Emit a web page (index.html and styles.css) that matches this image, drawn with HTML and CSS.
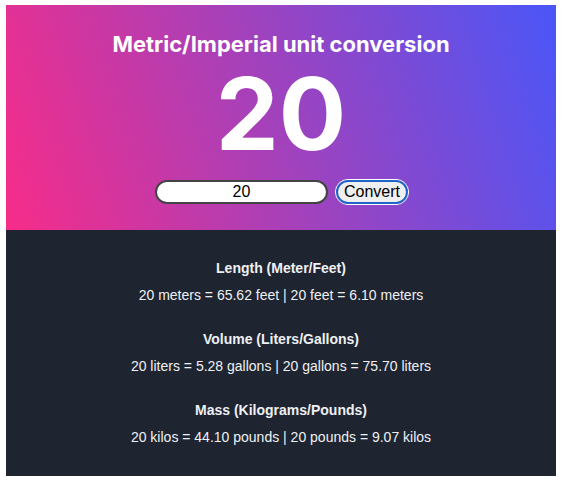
FILE: index.html
```html
<!DOCTYPE html>
<html lang="en">
<head>
    <meta charset="UTF-8">
    <meta name="viewport" content="width=device-width, initial-scale=1.0">
    <title>Metric/Imperial unit conversion</title>
    <link rel="stylesheet" href="styles.css">
</head>
<body>
    <div class="app">
        <!-- En-tête avec la valeur -->
        <header class="hero">
            <h1>Metric/Imperial unit conversion</h1>
            <div class="value">20</div>
            <form class="convert-form">
                <input type="text" class="value-input" value="20">
                <button type="button" class="button">Convert</button>
            </form>
        </header>

        <!-- Résultats -->
        <main class="results">
            <section class="group">
                <h3>Length (Meter/Feet)</h3>
                <p>20 meters = 65.62 feet | 20 feet = 6.10 meters</p>
            </section>
            <section class="group">
                <h3>Volume (Liters/Gallons)</h3>
                <p>20 liters = 5.28 gallons | 20 gallons = 75.70 liters</p>
            </section>
            <section class="group">
                <h3>Mass (Kilograms/Pounds)</h3>
                <p>20 kilos = 44.10 pounds | 20 pounds = 9.07 kilos</p>
            </section>
        </main>
    </div>
</body>
</html>
```

FILE: styles.css
```css
body {
    margin: 0;
    padding: 5px 6px;
    background-color: #fff;
    font-family: "Liberation Sans", Arial, sans-serif;
}

.app {
    width: 550px;
}

.hero {
    height: 225px;
    box-sizing: border-box;
    padding-top: 26px;
    background: linear-gradient(72deg, #f72c89 0%, #a042bd 50%, #4a56f7 100%);
    text-align: center;
    color: #fff;
}

.hero h1 {
    font-family: Inter, sans-serif;
    font-size: 22px;
    font-weight: 700;
    margin: 0;
    line-height: 26px;
}

.value {
    font-family: Inter, sans-serif;
    font-size: 100px;
    font-weight: 700;
    line-height: 114px;
    margin-top: 0;
}

.convert-form {
    display: flex;
    justify-content: center;
    align-items: center;
    gap: 7px;
    margin-top: 8px;
    padding-left: 2px;
}

.value-input {
    width: 173px;
    height: 24px;
    box-sizing: border-box;
    border: 2px solid #444;
    border-radius: 12px;
    text-align: center;
    font-family: "Liberation Sans", Arial, sans-serif;
    font-size: 16px;
    color: #000;
    padding: 0 8px;
}

.button {
    height: 26px;
    padding: 0 8px;
    border: 1px solid #fff;
    border-radius: 13px;
    outline: 2px solid #1f63c9;
    outline-offset: -3px;
    background-color: #efefef;
    font-family: "Liberation Sans", Arial, sans-serif;
    font-size: 16px;
    color: #000;
}

.results {
    height: 246px;
    box-sizing: border-box;
    padding-top: 29px;
    background-color: #1e2531;
    color: #eef0f3;
    text-align: center;
}

.group {
    margin-bottom: 26px;
}

.group h3 {
    font-size: 14px;
    font-weight: 700;
    margin: 0 0 9px;
    line-height: 18px;
}

.group p {
    font-size: 14px;
    margin: 0;
    line-height: 18px;
}
```
